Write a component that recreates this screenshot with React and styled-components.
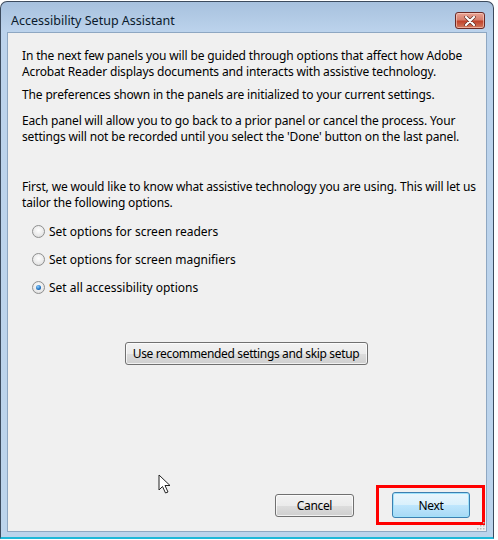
import React from 'react'
import styled, { createGlobalStyle } from 'styled-components'

const GlobalStyle = createGlobalStyle`
	html, body {
		margin: 0;
		padding: 0;
		background: #ffffff;
	}
	body {
		font-family: "Noto Sans", "Open Sans", "Liberation Sans", sans-serif;
	}
`

const Frame = styled.div`
	position: relative;
	width: 494px;
	height: 538px;
	margin: 1px 0 0 0;
	box-sizing: border-box;
	border: 1px solid #3c4b5e;
	border-bottom: 2px solid #1fb8d8;
	border-radius: 7px 7px 0 0;
	background: linear-gradient(to bottom, #a7c1de 0px, #bcd3ec 30px, #bcd4ec 100%);
	padding: 0 6px 5px 6px;
	display: flex;
	flex-direction: column;
`

const TitleBar = styled.div`
	height: 30px;
	display: flex;
	align-items: center;
	justify-content: space-between;
	padding: 0 4px 0 4px;
`

const Title = styled.span`
	font-family: "Noto Sans", "Open Sans", sans-serif;
	font-size: 12.5px;
	color: #0b1a2c;
	margin-top: 7px;
`

const CloseButton = styled.div`
	width: 30px;
	height: 17px;
	margin-top: 7px;
	margin-right: -2px;
	box-sizing: border-box;
	border: 1px solid #6b2a26;
	border-radius: 3px;
	background: linear-gradient(to bottom, #e8a394 0%, #d7806e 45%, #c0432c 55%, #d27a5f 100%);
	box-shadow: inset 0 0 0 1px rgba(255, 220, 210, 0.55);
	display: flex;
	align-items: center;
	justify-content: center;
`

const Client = styled.div`
	flex: 1;
	background: #f0f0f0;
	border: 1px solid #8ea7c2;
	display: flex;
	flex-direction: column;
	padding: 15px 14px 0 14px;
	position: relative;
	color: #000;
	font-size: 12px;
`

const Para = styled.p`
	margin: 0 0 ${p => p.$gap ?? 9}px 0;
	line-height: 16px;
	letter-spacing: -0.15px;
`

const Line = styled.span`
	display: block;
	white-space: nowrap;
`

const Options = styled.div`
	display: flex;
	flex-direction: column;
	gap: 12px;
	margin-top: 12px;
	padding-left: 10px;
`

const RadioRow = styled.label`
	display: flex;
	align-items: center;
	gap: 4px;
	height: 16px;
`

const RadioDot = styled.span`
	width: 11px;
	height: 11px;
	border-radius: 50%;
	border: 1px solid #8e8f8f;
	background: radial-gradient(circle at 50% 40%, #ffffff 0%, #e9e9e9 60%, #cfcfcf 100%);
	display: flex;
	align-items: center;
	justify-content: center;
	&::after {
		content: '';
		display: ${p => (p.$checked ? 'block' : 'none')};
		width: 5px;
		height: 5px;
		border-radius: 50%;
		background: radial-gradient(circle at 40% 35%, #8fd0ff 0%, #1d6fc0 60%, #0a3e7a 100%);
	}
`

const Center = styled.div`
	display: flex;
	justify-content: center;
	margin-top: 47px;
	padding-right: 2px;
`

const Button = styled.div`
	box-sizing: border-box;
	height: ${p => p.$h || 23}px;
	width: ${p => (p.$w ? p.$w + 'px' : 'auto')};
	padding: 0 8px;
	white-space: nowrap;
	letter-spacing: -0.35px;
	border: 1px solid ${p => (p.$focused ? '#3c7fb1' : '#707070')};
	border-radius: 3px;
	background: ${p =>
		p.$focused
			? 'linear-gradient(to bottom, #eaf6fd 0%, #d9f0fc 50%, #bee6fd 51%, #a7d9f5 100%)'
			: 'linear-gradient(to bottom, #f2f2f2 0%, #ebebeb 50%, #dddddd 51%, #cfcfcf 100%)'};
	box-shadow: inset 0 0 0 1px ${p => (p.$focused ? '#9fe2fb' : 'rgba(255,255,255,0.7)')};
	display: flex;
	align-items: center;
	justify-content: center;
	font-size: 12px;
	color: #000;
`

const Footer = styled.div`
	margin-top: auto;
	display: flex;
	justify-content: flex-end;
	align-items: center;
	gap: 22px;
	padding: 0 0 7px 0;
	margin-right: -13px;
	margin-bottom: -1px;
`

const Highlight = styled.div`
	box-sizing: border-box;
	width: 109px;
	height: 40px;
	border: 3px solid #ff0000;
	display: flex;
	align-items: center;
	justify-content: center;
	padding-left: 1px;
`

const Cursor = styled.svg`
	position: absolute;
	left: 150px;
	top: 441px;
`

const Grip = styled.svg`
	position: absolute;
	right: 1px;
	bottom: 1px;
`

const paragraphs = [
	{
		gap: 7,
		lines: [
			'In the next few panels you will be guided through options that affect how Adobe',
			'Acrobat Reader displays documents and interacts with assistive technology.',
		],
	},
	{
		gap: 10,
		lines: ['The preferences shown in the panels are initialized to your current settings.'],
	},
	{
		gap: 34,
		lines: [
			'Each panel will allow you to go back to a prior panel or cancel the process. Your',
			"settings will not be recorded until you select the 'Done' button on the last panel.",
		],
	},
	{
		gap: 0,
		lines: [
			'First, we would like to know what assistive technology you are using. This will let us',
			'tailor the following options.',
		],
	},
]

const options = [
	{ label: 'Set options for screen readers', checked: false },
	{ label: 'Set options for screen magnifiers', checked: false },
	{ label: 'Set all accessibility options', checked: true },
]

const App = () => {
	return (
		<>
			<GlobalStyle />
			<Frame>
				<TitleBar>
					<Title>Accessibility Setup Assistant</Title>
					<CloseButton>
						<svg width="12" height="10" viewBox="0 0 12 10">
							<path d="M2 1 L10 9 M10 1 L2 9" stroke="#5a2a22" strokeWidth="3.4" strokeLinecap="round" />
							<path d="M2 1 L10 9 M10 1 L2 9" stroke="#ffffff" strokeWidth="2.2" strokeLinecap="round" />
						</svg>
					</CloseButton>
				</TitleBar>
				<Client>
					{paragraphs.map((p, i) => (
						<Para key={i} $gap={p.gap}>
							{p.lines.map(l => (
								<Line key={l}>{l}</Line>
							))}
						</Para>
					))}
					<Options>
						{options.map(o => (
							<RadioRow key={o.label}>
								<RadioDot $checked={o.checked} />
								<span>{o.label}</span>
							</RadioRow>
						))}
					</Options>
					<Center>
						<Button $w={243}>Use recommended settings and skip setup</Button>
					</Center>
					<Footer>
						<Button $w={79}>Cancel</Button>
						<Highlight>
							<Button $w={78} $h={26} $focused>Next</Button>
						</Highlight>
					</Footer>
					<Cursor width="14" height="22" viewBox="0 0 14 22">
						<path
							d="M1 1 L1 16 L4.5 12.5 L7.5 19 L10 18 L7 11.5 L12 11.5 Z"
							fill="#ffffff"
							stroke="#222"
							strokeWidth="1"
							strokeLinejoin="round"
						/>
					</Cursor>
					<Grip width="10" height="10" viewBox="0 0 10 10">
						{[[8, 2], [8, 5], [5, 5], [8, 8], [5, 8], [2, 8]].map(([x, y]) => (
							<rect key={x + '-' + y} x={x} y={y} width="1.5" height="1.5" fill="#b9b9b9" />
						))}
					</Grip>
				</Client>
			</Frame>
		</>
	)
}

export default App
